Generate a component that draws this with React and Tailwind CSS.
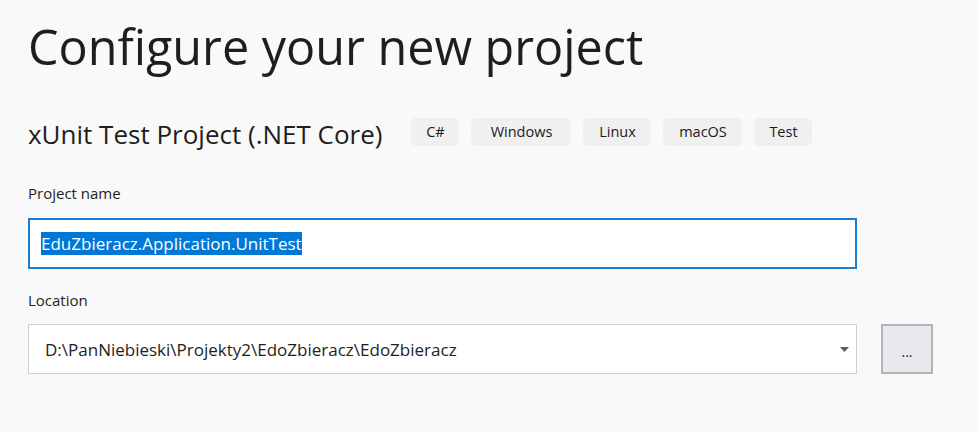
const tags = [
  { label: 'C#', w: 'w-[48px]' },
  { label: 'Windows', w: 'w-[100px]' },
  { label: 'Linux', w: 'w-[68px]' },
  { label: 'macOS', w: 'w-[79px]' },
  { label: 'Test', w: 'w-[58px]' },
];

function Tag({ label, w }) {
  return (
    <span className={`${w} h-[28px] flex items-center justify-center rounded-[5px] bg-[#f0f0f0] text-[14.5px] text-[#1a1a1a]`}>
      {label}
    </span>
  );
}

export default function App() {
  return (
    <div className="min-h-screen bg-[#f9f9f9] pl-[28px] pt-[18px] font-['Open_Sans',sans-serif] text-[#1e1e1e]">
      <h1 className="text-[48.5px] leading-[56px]">Configure your new project</h1>

      <div className="mt-[44px] flex items-center h-[28px]">
        <h2 className="text-[26px] leading-[28px] pt-[3px]">xUnit Test Project (.NET Core)</h2>
        <div className="ml-[29px] flex gap-[12px]">
          {tags.map((t) => (
            <Tag key={t.label} {...t} />
          ))}
        </div>
      </div>

      <div className="mt-[37px] text-[15px] leading-[20px]">Project name</div>
      <div className="mt-[15px] w-[829px] h-[51px] border-2 border-[#1a7fd4] bg-white flex items-center pl-[11px]">
        <span className="bg-[#0078d7] text-white text-[17px] leading-[23px]">
          EduZbieracz.Application.UnitTest
        </span>
      </div>

      <div className="mt-[21px] text-[15px] leading-[20px]">Location</div>
      <div className="mt-[14px] flex">
        <div className="w-[829px] h-[50px] border border-[#ccceda] bg-white flex items-center pl-[16px] pr-[6px]">
          <span className="flex-1 text-[17px] pt-[1px]">D:\PanNiebieski\Projekty2\EdoZbieracz\EdoZbieracz</span>
          <svg width="9" height="5" viewBox="0 0 9 5" className="mr-[1px]">
            <path d="M0 0h9L4.5 5z" fill="#5d5d5d" />
          </svg>
        </div>
        <button className="ml-[24px] w-[52px] h-[50px] border-2 border-[#b4b4b4] bg-[#e8e8ee] text-[14px] leading-none pt-[6px]">
          ...
        </button>
      </div>
    </div>
  );
}
